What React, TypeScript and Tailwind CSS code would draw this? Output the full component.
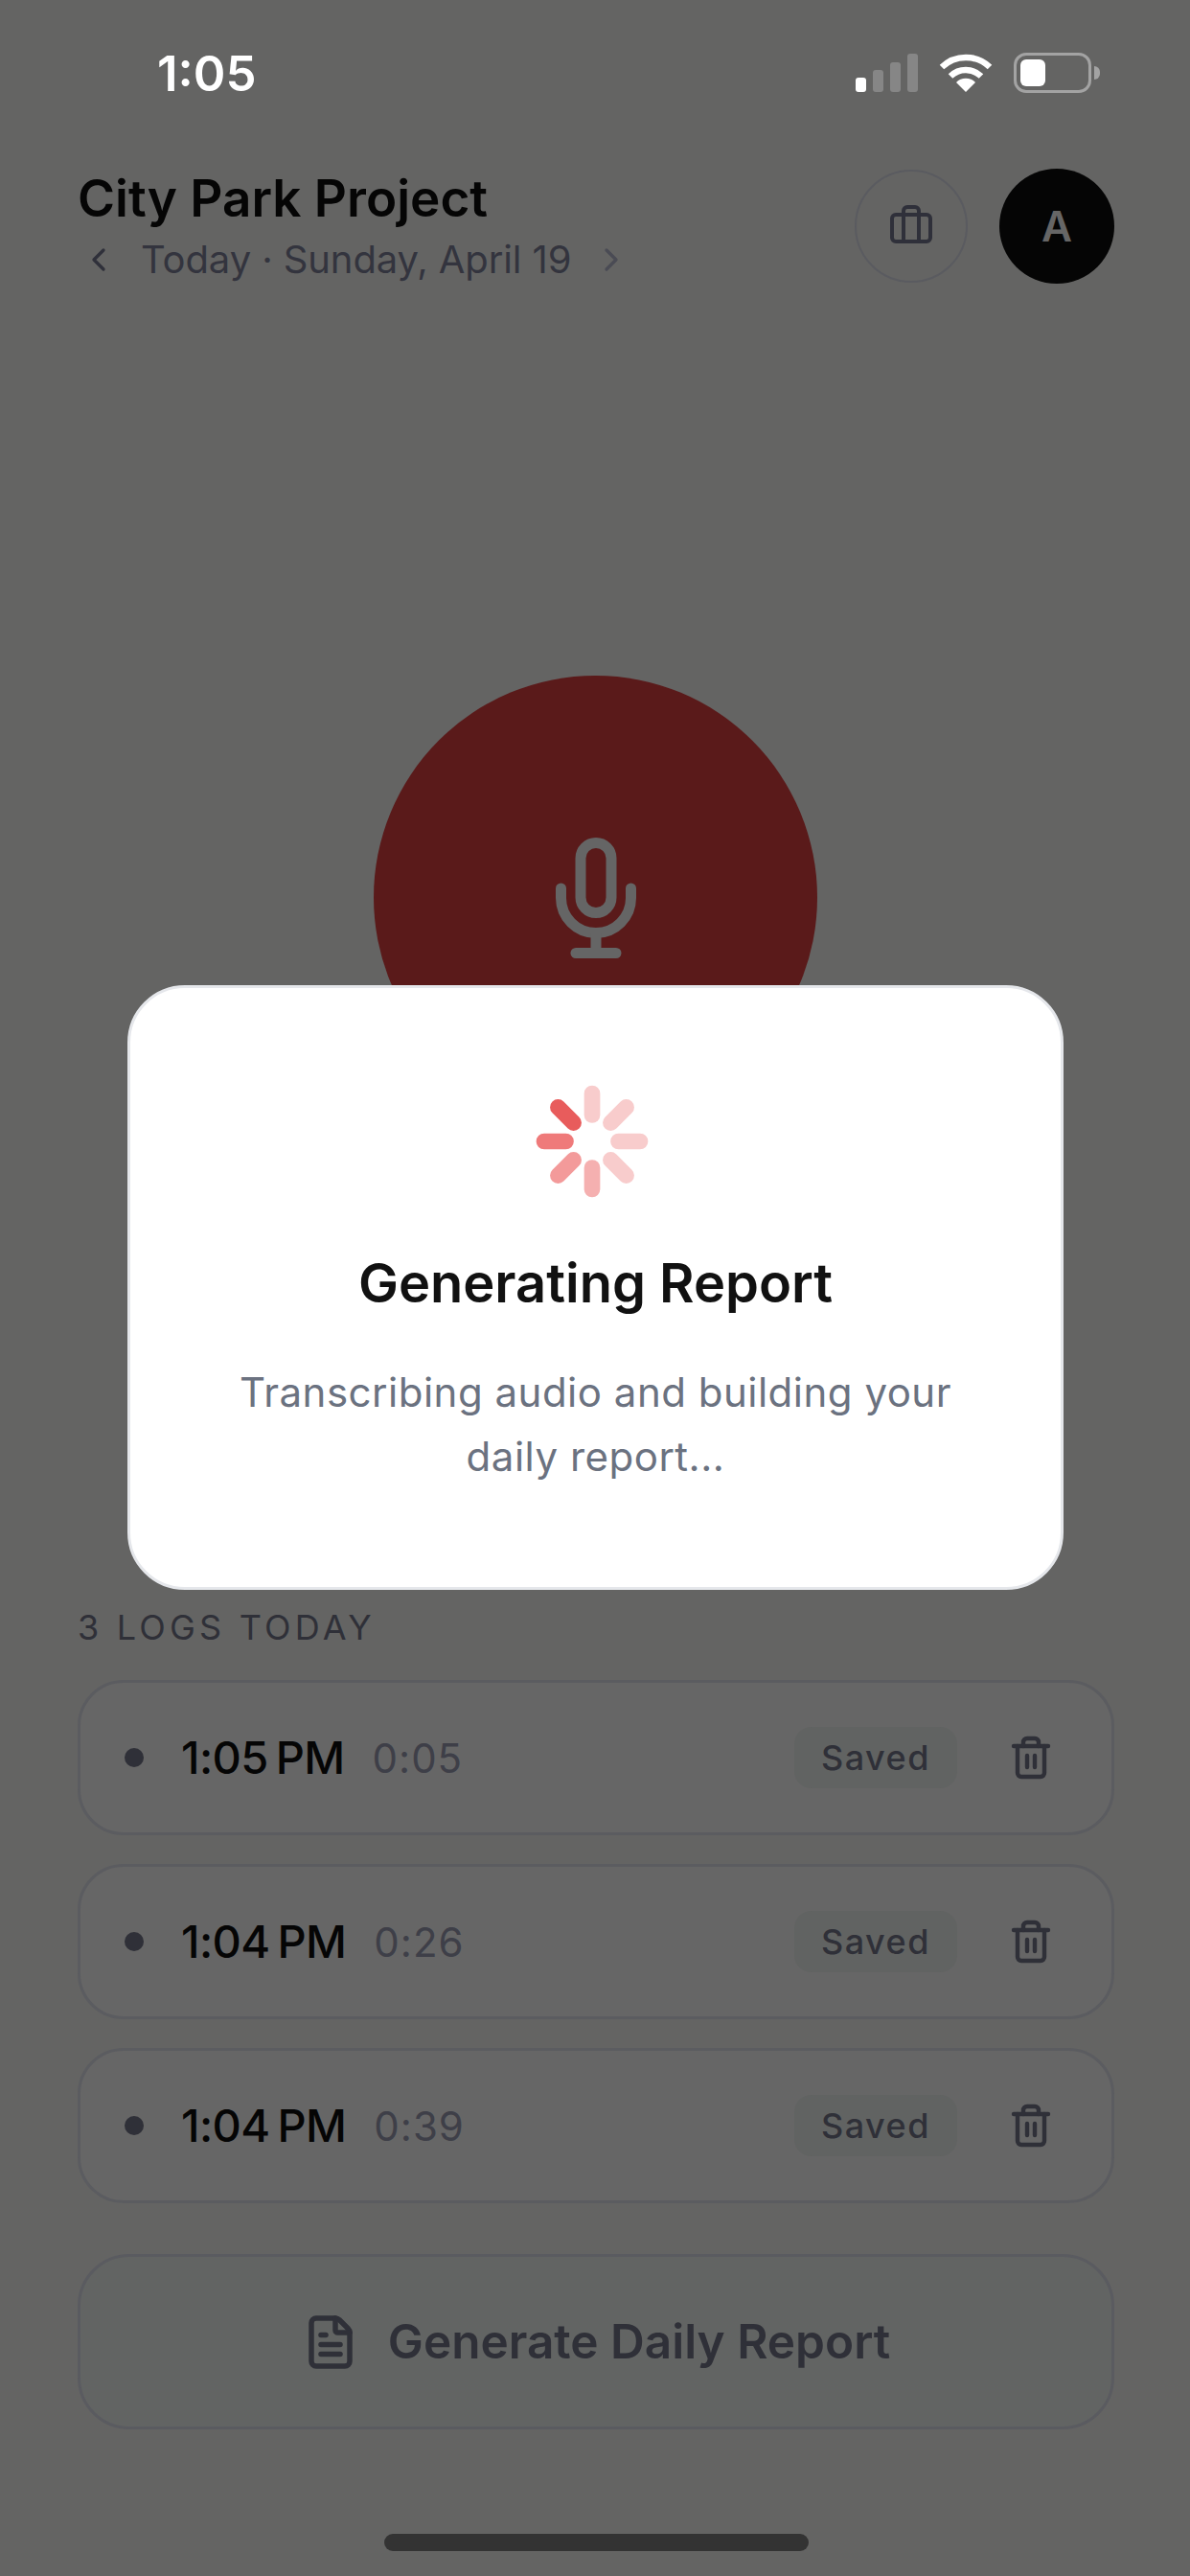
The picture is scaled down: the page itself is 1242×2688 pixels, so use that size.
import { Briefcase, ChevronLeft, ChevronRight, FileText, Trash2 } from "lucide-react";

const logs = [
  { time: "1:05 PM", len: "0:05" },
  { time: "1:04 PM", len: "0:26" },
  { time: "1:04 PM", len: "0:39" },
];

const spokes = [
  { x1: 60, y1: 32.5, x2: 60, y2: 10, c: "#f8cccc" },
  { x1: 79.4, y1: 40.6, x2: 95.6, y2: 24.4, c: "#f8cccc" },
  { x1: 87.5, y1: 60, x2: 110, y2: 60, c: "#f8cccc" },
  { x1: 79.4, y1: 79.4, x2: 95.6, y2: 95.6, c: "#f8cccc" },
  { x1: 60, y1: 87.5, x2: 60, y2: 110, c: "#f5b0b0" },
  { x1: 40.6, y1: 79.4, x2: 24.4, y2: 95.6, c: "#f39a9a" },
  { x1: 32.5, y1: 60, x2: 10, y2: 60, c: "#ef7a7a" },
  { x1: 40.6, y1: 40.6, x2: 24.4, y2: 24.4, c: "#e85c5c" },
];

function Signal() {
  return (
    <div className="flex items-end gap-[7px] h-[40px]">
      <div className="w-[11px] h-[15px] rounded-[3px] bg-white" />
      <div className="w-[11px] h-[23px] rounded-[3px] bg-[#868686]" />
      <div className="w-[11px] h-[31px] rounded-[3px] bg-[#868686]" />
      <div className="w-[11px] h-[40px] rounded-[3px] bg-[#868686]" />
    </div>
  );
}

function Wifi() {
  return (
    <svg width="56" height="42" viewBox="0 0 56 42" fill="none">
      <path d="M3 15 A36 36 0 0 1 53 15" stroke="#fff" strokeWidth="6.5" />
      <path d="M12 24.5 A23 23 0 0 1 44 24.5" stroke="#fff" strokeWidth="6.5" />
      <path d="M28 41 L18 31 A14 14 0 0 1 38 31 Z" fill="#fff" />
    </svg>
  );
}

function Battery() {
  return (
    <div className="flex items-center">
      <div className="w-[81px] h-[42px] rounded-[13px] border-[3px] border-[#a3a3a3] p-[4px]">
        <div className="w-[26px] h-full rounded-[6px] bg-white" />
      </div>
      <div className="w-[6px] h-[14px] ml-[3px] rounded-r-[6px] bg-[#a3a3a3]" />
    </div>
  );
}

function Mic() {
  return (
    <svg width="84" height="126" viewBox="0 0 84 126" fill="none" stroke="#656565" strokeWidth="11" strokeLinecap="round" className="ml-[1px]">
      <rect x="26" y="5.5" width="32" height="73" rx="16" />
      <path d="M5.5 53 V63 A36.5 36.5 0 0 0 78.5 63 V53" />
      <path d="M42 100 V120" strokeLinecap="butt" />
      <path d="M21 120.5 H63" />
    </svg>
  );
}

export default function App() {
  return (
    <div className="relative w-[1242px] h-[2688px] overflow-hidden bg-[#646463] font-['Inter',sans-serif]">
      <div className="flex items-center justify-between h-[150px] pl-[164px] pr-[94px] pt-[2px]">
        <span className="text-[51px] leading-none font-semibold text-white">1:05</span>
        <div className="flex items-center gap-[22px]">
          <Signal />
          <Wifi />
          <Battery />
        </div>
      </div>

      <div className="flex items-center justify-between pl-[81px] pr-[79px] mt-[26px]">
        <div className="flex flex-col">
          <h1 className="text-[53px] leading-[62px] font-semibold text-[#050505] -mt-[2px]">City Park Project</h1>
          <div className="flex items-center mt-[9px]">
            <ChevronLeft size={40} strokeWidth={2} className="text-[#2f303a] mr-[24px] ml-[2px]" />
            <span className="text-[40px] leading-[48px] text-[#33343e] tracking-[-0.1px]">Today · Sunday, April 19</span>
            <ChevronRight size={40} strokeWidth={2} className="text-[#4a4b54] ml-[22px]" />
          </div>
        </div>
        <div className="flex items-center gap-[33px]">
          <div className="w-[118px] h-[118px] rounded-full border-[2px] border-[#5a5b60] flex items-center justify-center">
            <Briefcase size={48} strokeWidth={2} className="text-[#2f303a]" />
          </div>
          <div className="w-[120px] h-[120px] rounded-full bg-[#050505] flex items-center justify-center text-[44px] font-semibold text-[#666666]">
            A
          </div>
        </div>
      </div>

      <div className="flex justify-center mt-[409px]">
        <div className="w-[463px] h-[463px] rounded-full bg-[#5a1a1a] flex items-center justify-center">
          <Mic />
        </div>
      </div>

      <div className="mt-[508px] px-[81px] pr-[79px]">
        <div className="text-[36px] leading-[44px] tracking-[4.2px] text-[#2f3038]">3 LOGS TODAY</div>
        <div className="flex flex-col gap-[30px] mt-[33px]">
          {logs.map((l, i) => (
            <div key={i} className="h-[162px] rounded-[48px] border-[3px] border-[#5b5c60] bg-[#666666] flex items-center pl-[46px] pr-[60px]">
              <div className="w-[20px] h-[20px] rounded-full bg-[#2f3038]" />
              <span className="ml-[39px] text-[47px] font-medium text-[#050505] tracking-[-0.6px] [word-spacing:-4px]">{l.time}</span>
              <span className="ml-[29px] text-[42px] text-[#3e3f48] tracking-[1px]">{l.len}</span>
              <div className="ml-auto h-[64px] w-[170px] rounded-[18px] bg-[#616362] flex items-center justify-center text-[36px] font-medium tracking-[1.5px] text-[#2f3038]">
                Saved
              </div>
              <Trash2 size={48} strokeWidth={2.2} className="ml-[53px] text-[#2f3038]" />
            </div>
          ))}
        </div>
        <div className="mt-[53px] h-[183px] rounded-[54px] border-[3px] border-[#5a5b60] bg-[#626463] flex items-center justify-center gap-[30px]">
          <FileText size={60} strokeWidth={2.2} className="text-[#2f3038]" />
          <span className="text-[49.5px] font-semibold text-[#2f3038]">Generate Daily Report</span>
        </div>
      </div>

      <div className="absolute left-[401px] top-[2644px] w-[443px] h-[18px] rounded-full bg-[#333333]" />

      <div className="absolute left-[133px] top-[1028px] w-[977px] h-[631px] rounded-[60px] bg-white border-[3px] border-[#e5e7eb] flex flex-col items-center pt-[100px]">
        <svg width="120" height="120" viewBox="0 0 120 120" fill="none" strokeLinecap="round" strokeWidth="16.7" className="-ml-[8px]">
          {spokes.map((s, i) => (
            <line key={i} x1={s.x1} y1={s.y1} x2={s.x2} y2={s.y2} stroke={s.c} />
          ))}
        </svg>
        <h2 className="mt-[54px] text-[56px] leading-[68px] font-semibold text-[#111111]">Generating Report</h2>
        <p className="mt-[47px] w-[800px] text-center text-[42px] leading-[66.5px] text-[#6b7280] tracking-[0.5px]">
          Transcribing audio and building your daily report...
        </p>
      </div>
    </div>
  );
}
